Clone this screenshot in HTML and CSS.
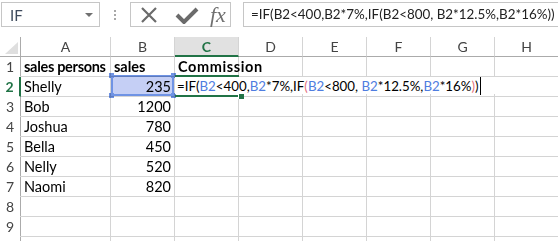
FILE: index.html
```html
<!DOCTYPE html>
<html lang="en">
<head>
  <meta charset="UTF-8">
  <title>Commission sheet</title>
  <link rel="stylesheet" href="styles.css">
</head>
<body>
  <div class="toolbar">
    <div class="namebox">
      <span>IF</span>
      <span class="caret"></span>
    </div>
    <div class="grip"><i></i><i></i><i></i></div>
    <div class="fx-buttons">
      <svg class="icon cancel" width="20" height="18" viewBox="0 0 20 18">
        <path d="M3 2 L17 16 M17 2 L3 16" stroke="#6b6b6b" stroke-width="2.2" fill="none"/>
      </svg>
      <svg class="icon enter" width="24" height="18" viewBox="0 0 24 18">
        <path d="M2 9 L9 16 L22 3" stroke="#6b6b6b" stroke-width="4" fill="none"/>
      </svg>
      <span class="fx">fx</span>
    </div>
    <div class="formula">=IF(B2&lt;400,B2*7%,IF(B2&lt;800, B2*12.5%,B2*16%))</div>
  </div>

  <div class="sheet">
    <div class="grid">
      <div class="corner"></div>
      <div class="col-head">A</div>
      <div class="col-head">B</div>
      <div class="col-head active">C</div>
      <div class="col-head">D</div>
      <div class="col-head">E</div>
      <div class="col-head">F</div>
      <div class="col-head">G</div>
      <div class="col-head">H</div>

      <div class="row-head">1</div>
      <div class="cell bold narrow">sales persons</div>
      <div class="cell bold">sales</div>
      <div class="cell bold wide">Commission</div>
      <div class="cell"></div><div class="cell"></div><div class="cell"></div><div class="cell"></div><div class="cell"></div>

      <div class="row-head active">2</div>
      <div class="cell">Shelly</div>
      <div class="cell num">235</div>
      <div class="cell"></div>
      <div class="cell"></div><div class="cell"></div><div class="cell"></div><div class="cell"></div><div class="cell"></div>

      <div class="row-head">3</div>
      <div class="cell">Bob</div>
      <div class="cell num">1200</div>
      <div class="cell"></div><div class="cell"></div><div class="cell"></div><div class="cell"></div><div class="cell"></div><div class="cell"></div>

      <div class="row-head">4</div>
      <div class="cell">Joshua</div>
      <div class="cell num">780</div>
      <div class="cell"></div><div class="cell"></div><div class="cell"></div><div class="cell"></div><div class="cell"></div><div class="cell"></div>

      <div class="row-head">5</div>
      <div class="cell">Bella</div>
      <div class="cell num">450</div>
      <div class="cell"></div><div class="cell"></div><div class="cell"></div><div class="cell"></div><div class="cell"></div><div class="cell"></div>

      <div class="row-head">6</div>
      <div class="cell">Nelly</div>
      <div class="cell num">520</div>
      <div class="cell"></div><div class="cell"></div><div class="cell"></div><div class="cell"></div><div class="cell"></div><div class="cell"></div>

      <div class="row-head">7</div>
      <div class="cell">Naomi</div>
      <div class="cell num">820</div>
      <div class="cell"></div><div class="cell"></div><div class="cell"></div><div class="cell"></div><div class="cell"></div><div class="cell"></div>

      <div class="row-head">8</div>
      <div class="cell"></div><div class="cell"></div><div class="cell"></div><div class="cell"></div><div class="cell"></div><div class="cell"></div><div class="cell"></div><div class="cell"></div>

      <div class="row-head">9</div>
      <div class="cell"></div><div class="cell"></div><div class="cell"></div><div class="cell"></div><div class="cell"></div><div class="cell"></div><div class="cell"></div><div class="cell"></div>

      <div class="row-head"></div>
      <div class="cell"></div><div class="cell"></div><div class="cell"></div><div class="cell"></div><div class="cell"></div><div class="cell"></div><div class="cell"></div><div class="cell"></div>
    </div>

    <!-- range reference highlight on B2 -->
    <div class="ref-box">
      <span class="h tl"></span><span class="h tr"></span><span class="h bl"></span><span class="h br"></span>
    </div>

    <!-- in-cell editor on C2 -->
    <div class="editor">=IF(<span class="ref">B2</span>&lt;400,<span class="ref">B2</span>*7%,IF<span class="par">(</span><span class="ref">B2</span>&lt;800, <span class="ref">B2</span>*12.5%,<span class="ref">B2</span>*16%<span class="par">)</span>)<span class="cursor"></span></div>
    <div class="active-cell"><span class="fill-handle"></span></div>
  </div>
</body>
</html>
```

FILE: styles.css
```css
body {
  margin: 0;
  height: 241px;
  background: #fff;
  font-family: Lato, "Open Sans", sans-serif;
  font-size: 14.5px;
  color: #000;
  overflow: hidden;
}

.toolbar {
  display: flex;
  align-items: center;
  height: 25px;
  padding: 2px 0 0 1px;
}

.namebox {
  width: 99px;
  height: 23px;
  border: 1px solid #c6c6c6;
  display: flex;
  align-items: center;
  justify-content: space-between;
  padding: 0 6px 0 8px;
  box-sizing: content-box;
  color: #3d4a5c;
  font-size: 15px;
}

.namebox, .fx-buttons, .formula {
  box-sizing: border-box;
  height: 25px;
}

.caret {
  width: 0;
  height: 0;
  border-left: 4px solid transparent;
  border-right: 4px solid transparent;
  border-top: 4px solid #707070;
}

.grip {
  width: 30px;
  display: flex;
  flex-direction: column;
  align-items: center;
  gap: 2px;
}

.grip i {
  width: 2px;
  height: 2px;
  background: #a8a8a8;
}

.fx-buttons {
  width: 101px;
  border: 1px solid #c6c6c6;
  display: flex;
  align-items: center;
  padding: 0 0 0 8px;
}

.enter {
  margin-left: 16px;
}

.fx {
  font-family: "Liberation Serif", serif;
  font-style: italic;
  font-size: 22px;
  color: #707070;
  line-height: 1;
  margin-left: 11px;
}

.formula {
  flex: 1;
  margin-left: 12px;
  border: 1px solid #c6c6c6;
  border-right: none;
  padding: 0 0 0 7px;
  line-height: 23px;
  font-size: 13.4px;
  white-space: nowrap;
  overflow: hidden;
  color: #222;
}

.sheet {
  position: relative;
  margin-top: 10px;
}

.grid {
  display: grid;
  grid-template-columns: 21px 90px repeat(7, 64px);
  grid-auto-rows: 20px;
}

.grid > div {
  box-sizing: border-box;
  border-right: 1px solid #d4d4d4;
  border-bottom: 1px solid #d4d4d4;
  white-space: nowrap;
  line-height: 19px;
}

.corner {
  position: relative;
  border-right-color: #ababab !important;
  border-bottom-color: #ababab !important;
}

.corner::after {
  content: "";
  position: absolute;
  right: 2px;
  bottom: 2px;
  border-left: 13px solid transparent;
  border-bottom: 12px solid #dfdfdf;
}

.col-head {
  text-align: center;
  color: #444;
  font-size: 14px;
  border-bottom-color: #ababab !important;
}

.col-head.active {
  background: #e1e1e1;
  color: #217346;
  font-weight: bold;
  border-bottom: 2px solid #217346 !important;
}

.row-head {
  text-align: center;
  color: #444;
  font-size: 14px;
  border-bottom-color: transparent !important;
  border-right-color: #ababab !important;
}

.row-head.active {
  color: #217346;
  font-weight: bold;
  border-right: 2px solid #217346 !important;
}

.cell {
  padding: 0 3px;
}

.bold {
  font-weight: bold;
}

.narrow {
  letter-spacing: -0.3px;
}

.wide {
  letter-spacing: 0.6px;
}

.num {
  text-align: right;
}

.ref-box {
  position: absolute;
  left: 111px;
  top: 38px;
  width: 63px;
  height: 21px;
  box-sizing: border-box;
  border: 2px solid #6f93e4;
  background: #c5cff5;
  mix-blend-mode: multiply;
}

.h {
  position: absolute;
  width: 5px;
  height: 5px;
  background: #6f93e4;
}

.tl { left: -4px; top: -4px; }
.tr { right: -4px; top: -4px; }
.bl { left: -4px; bottom: -4px; }
.br { right: -4px; bottom: -4px; }

.editor {
  position: absolute;
  left: 175px;
  top: 40px;
  width: 321px;
  height: 17px;
  background: #fff;
  padding-left: 2px;
  line-height: 17px;
  font-size: 13.3px;
  white-space: nowrap;
}

.ref { color: #4f7de0; }
.par { color: #e4727d; }

.cursor {
  display: inline-block;
  width: 1px;
  height: 18px;
  background: #000;
  vertical-align: -4px;
  margin-left: 1px;
}

.active-cell {
  position: absolute;
  left: 175px;
  top: 38px;
  width: 64px;
  height: 22px;
  box-sizing: border-box;
  border-top: 2px solid #217346;
  border-bottom: 2px solid #217346;
}

.fill-handle {
  position: absolute;
  right: -5px;
  bottom: -4px;
  width: 5px;
  height: 5px;
  background: #217346;
  border-left: 1px solid #fff;
}
```
